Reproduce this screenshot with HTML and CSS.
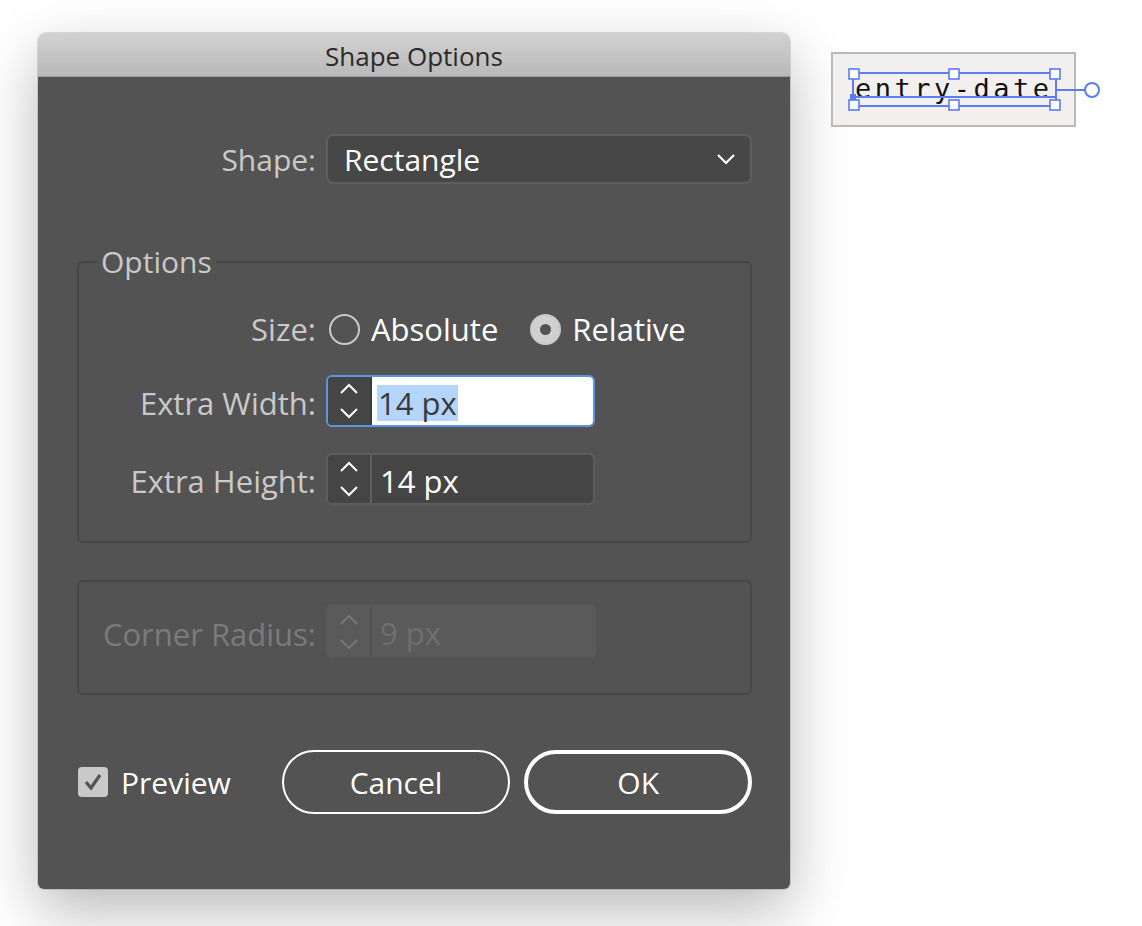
FILE: index.html
```html
<!DOCTYPE html>
<html>
<head>
<meta charset="utf-8">
<link rel="stylesheet" href="styles.css">
</head>
<body>
<div class="page">
  <div class="dialog">
    <div class="titlebar">Shape Options</div>
    <div class="dbody">
      <div class="row shape-row">
        <span class="lbl">Shape:</span>
        <div class="select">
          <span>Rectangle</span>
          <svg class="chev" width="20" height="12" viewBox="0 0 20 12"><path d="M2 2 L10 10 L18 2" fill="none" stroke="#fff" stroke-width="2.2"/></svg>
        </div>
      </div>

      <fieldset class="group options">
        <legend>Options</legend>
        <div class="row size-row">
          <span class="lbl">Size:</span>
          <div class="radios">
            <span class="radio"></span><span class="rtext">Absolute</span>
            <span class="radio on"></span><span class="rtext">Relative</span>
          </div>
        </div>
        <div class="row field-row fw">
          <span class="lbl">Extra Width:</span>
          <div class="num focus">
            <span class="step">
              <svg width="22" height="40" viewBox="0 0 22 40"><path d="M3 12 L11 4 L19 12 M3 28 L11 36 L19 28" fill="none" stroke="#fff" stroke-width="2"/></svg>
            </span>
            <span class="val"><span class="sel">14 px</span></span>
          </div>
        </div>
        <div class="row field-row fh">
          <span class="lbl">Extra Height:</span>
          <div class="num">
            <span class="step">
              <svg width="22" height="40" viewBox="0 0 22 40"><path d="M3 12 L11 4 L19 12 M3 28 L11 36 L19 28" fill="none" stroke="#fff" stroke-width="2"/></svg>
            </span>
            <span class="val">14 px</span>
          </div>
        </div>
      </fieldset>

      <fieldset class="group corner">
        <div class="row field-row">
          <span class="lbl dis">Corner Radius:</span>
          <div class="num disabled">
            <span class="step">
              <svg width="22" height="40" viewBox="0 0 22 40"><path d="M3 12 L11 4 L19 12 M3 28 L11 36 L19 28" fill="none" stroke="#767676" stroke-width="2"/></svg>
            </span>
            <span class="val">9 px</span>
          </div>
        </div>
      </fieldset>

      <div class="footer">
        <div class="check">
          <span class="box"><svg width="30" height="30" viewBox="0 0 30 30"><path d="M8 15 L13 21 L22 8" fill="none" stroke="#555" stroke-width="3.2"/></svg></span>
          <span class="ctext">Preview</span>
        </div>
        <button class="btn">Cancel</button>
        <button class="btn default">OK</button>
      </div>
    </div>
  </div>

  <div class="widget">
    <span class="wtext">entry-date</span>
    <svg class="selection" width="280" height="75" viewBox="0 0 280 75">
      <g fill="none" stroke="#5b7cf2" stroke-width="2">
        <rect x="22" y="21" width="203" height="33"/>
        <line x1="22" y1="45" x2="225" y2="45"/>
        <line x1="225" y1="38" x2="254" y2="38"/>
        <circle cx="261" cy="38" r="7" fill="#fff"/>
      </g>
      <rect x="19" y="42" width="6" height="6" fill="#5b7cf2"/>
      <g fill="#fff" stroke="#5b7cf2" stroke-width="1.6">
        <rect x="18" y="17" width="10" height="10"/>
        <rect x="118" y="17" width="10" height="10"/>
        <rect x="219" y="17" width="10" height="10"/>
        <rect x="18" y="48" width="10" height="10"/>
        <rect x="118" y="48" width="10" height="10"/>
        <rect x="219" y="48" width="10" height="10"/>
      </g>
    </svg>
  </div>
</div>
</body>
</html>
```

FILE: styles.css
```css
* { box-sizing: border-box; }
html, body { margin: 0; padding: 0; }
body {
  background: #ffffff;
  width: 1142px;
  height: 926px;
  overflow: hidden;
  font-family: "Open Sans", "Noto Sans", sans-serif;
}
.page {
  display: flex;
  align-items: flex-start;
  padding: 33px 0 0 38px;
}
.dialog {
  width: 752px;
  height: 856px;
  display: flex;
  flex-direction: column;
  border-radius: 8px 8px 6px 6px;
  box-shadow: 0 22px 60px rgba(0,0,0,0.28), 0 0 0 1px rgba(0,0,0,0.12);
}
.titlebar {
  height: 44px;
  line-height: 47px;
  text-align: center;
  font-size: 26px;
  color: #2a2a2a;
  background: linear-gradient(#d2d2d2, #b8b8b8);
  border-bottom: 1px solid #9c9c9c;
  border-radius: 8px 8px 0 0;
}
.dbody {
  flex: 1;
  background: #535353;
  padding: 57px 38px 0 39px;
  border-radius: 0 0 6px 6px;
}
.row {
  display: grid;
  grid-template-columns: 239px 1fr;
  column-gap: 10px;
  align-items: center;
}
.lbl {
  text-align: right;
  font-size: 31px;
  color: #c9c9c9;
  white-space: nowrap;
}
.shape-row .lbl { font-size: 30px; }
.field-row .lbl { padding-top: 4px; }
.lbl.dis { color: #7b7b7b; }
.select {
  height: 50px;
  border: 2px solid #5e5e5e;
  background: #474747;
  border-radius: 7px;
  display: flex;
  align-items: center;
  justify-content: space-between;
  padding: 0 14px 0 16px;
  font-size: 30px;
  color: #fff;
}
.chev { display: block; }

.group {
  margin: 0;
  border: 2px solid #474747;
  border-radius: 6px;
  padding: 0;
}
.group .row { grid-template-columns: 237px 1fr; }
.options { margin-top: 60px; padding-bottom: 36px; }
.options legend {
  margin-left: 18px;
  padding: 0 4px;
  font-size: 30px;
  line-height: 36px;
  color: #c9c9c9;
}
.size-row { margin-top: 28px; height: 40px; }
.radios {
  display: flex;
  align-items: center;
}
.radio {
  width: 31px;
  height: 31px;
  border-radius: 50%;
  border: 2px solid #c9c9c9;
  margin-left: 3px;
  margin-right: 11px;
  flex: none;
}
.radio.on {
  background: #d0d0d0;
  position: relative;
  margin-left: 32px;
}
.radio.on::after {
  content: "";
  position: absolute;
  left: 8px; top: 8px;
  width: 11px; height: 11px;
  border-radius: 50%;
  background: #535353;
}
.rtext { font-size: 31px; color: #fff; }

.fw { margin-top: 27px; }
.fh { margin-top: 26px; }
.num {
  width: 269px;
  height: 52px;
  display: flex;
  border: 2px solid #5d5d5d;
  border-radius: 6px;
  background: #454545;
  overflow: hidden;
}
.step {
  width: 44px;
  flex: none;
  display: flex;
  align-items: center;
  justify-content: center;
  background: #454545;
  border-right: 2px solid #5f5f5f;
}
.step svg { display: block; }
.val {
  flex: 1;
  display: flex;
  align-items: center;
  padding-left: 8px;
  padding-top: 3px;
  font-size: 31px;
  color: #fff;
}
.num.focus {
  border-color: #5e93e3;
}
.num.focus .step { border-right-color: #3a3a3a; }
.num.focus .val {
  background: #fff;
  color: #3a3a3a;
  padding-left: 5px;
}
.sel {
  background: #b4d5fe;
  padding: 0 1px;
  line-height: 36px;
}

.corner { margin-top: 37px; padding: 23px 0 35px; }
.num.disabled {
  border-color: transparent;
  background: #5a5a5a;
  border-radius: 5px;
  width: 270px;
  height: 53px;
}
.num.disabled .step { background: #5a5a5a; border-right-color: #505050; }
.num.disabled .val { color: #6f6f6f; }

.footer {
  display: flex;
  align-items: center;
  margin-top: 55px;
}
.check {
  display: flex;
  align-items: center;
  width: 204px;
  margin-left: 1px;
}
.box {
  width: 30px;
  height: 30px;
  border-radius: 4px;
  background: #c9c9c9;
  margin-right: 13px;
}
.box svg { display: block; }
.ctext { font-size: 30px; color: #fff; }
.btn {
  width: 229px;
  height: 64px;
  border: 2px solid #fff;
  border-radius: 32px;
  background: transparent;
  color: #fff;
  font-family: "Open Sans", "Noto Sans", sans-serif;
  font-size: 30px;
  padding: 0;
}
.btn.default {
  border-width: 4px;
  margin-left: 14px;
  width: 228px;
}

.widget {
  position: relative;
  margin: 19px 0 0 41px;
  width: 245px;
  height: 75px;
  border: 2px solid #b9b9b9;
  background: #f1f0ef;
}
.wtext {
  display: block;
  padding: 18px 0 0 22px;
  font-family: "DejaVu Sans Mono", monospace;
  font-size: 27px;
  letter-spacing: 3.5px;
  line-height: 34px;
  color: #111;
}
.selection {
  position: absolute;
  left: -2px;
  top: -2px;
  overflow: visible;
}
```
